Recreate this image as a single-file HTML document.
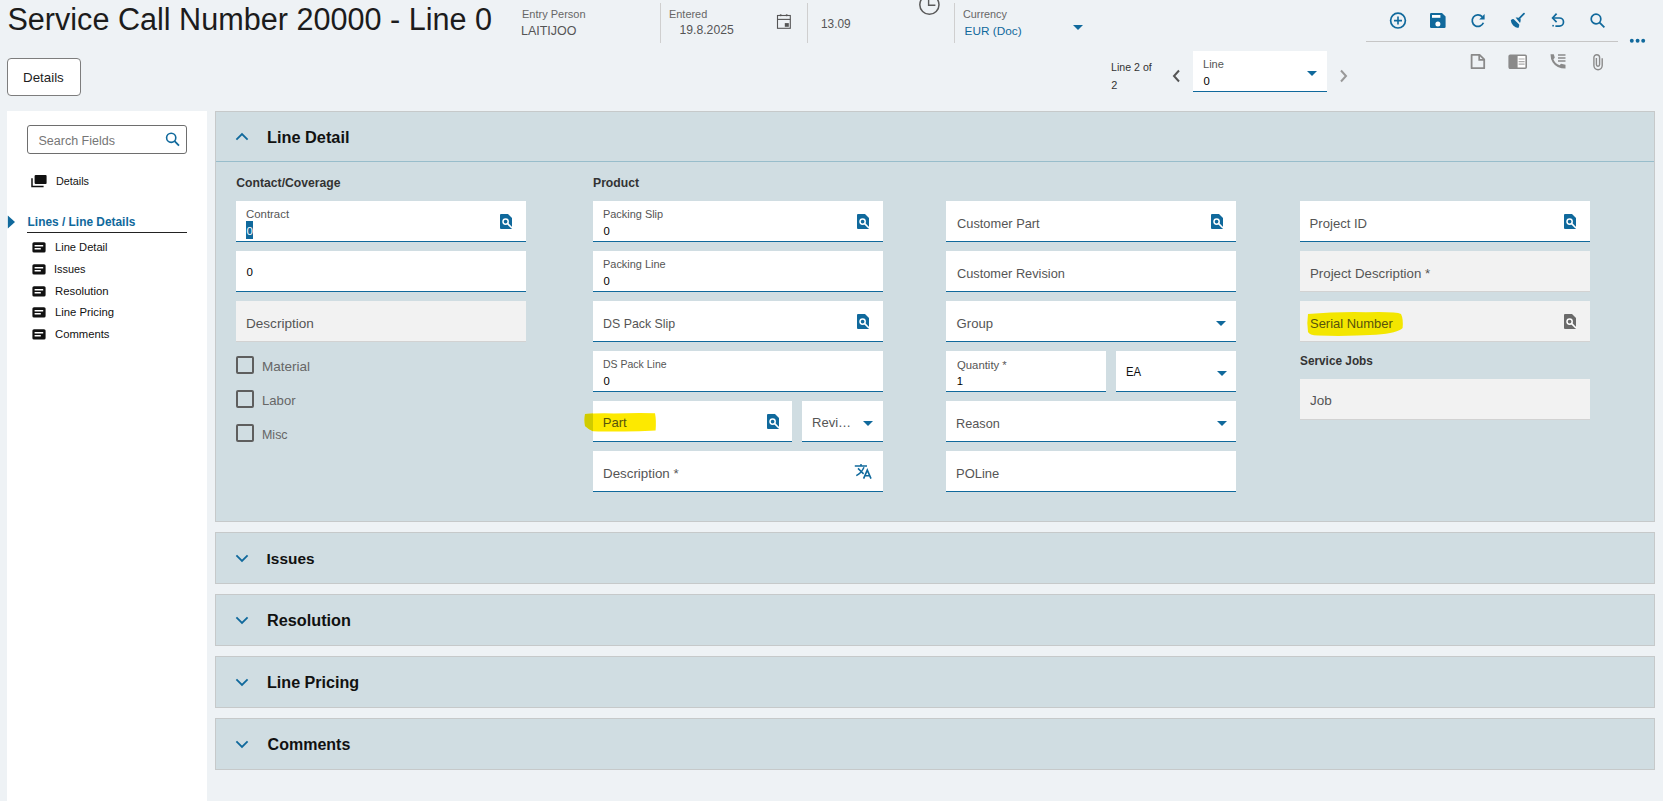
<!DOCTYPE html>
<html><head><meta charset="utf-8"><title>Service Call</title>
<style>
html,body{margin:0;padding:0}
body{width:1663px;height:801px;overflow:hidden;position:relative;background:#eef2f5;font-family:"Liberation Sans",sans-serif}
.t{position:absolute;white-space:nowrap;line-height:30px;height:30px}
svg{overflow:visible}
</style></head><body>
<div class="t" style="left:7.40px;top:4.40px;font-size:30.6px;color:#1c1c1c;font-weight:400;">Service Call Number 20000 - Line 0</div>
<div style="position:absolute;left:7px;top:58px;width:72px;height:36px;background:#fff;border:1px solid #7d7d7d;border-radius:4px"></div>
<div class="t" style="left:23.46px;top:62.53px;font-size:12.9px;color:#1e1e1e;font-weight:400;transform:scaleX(1.0354);transform-origin:0 0;">Details</div>
<div class="t" style="left:522.00px;top:-0.81px;font-size:11px;color:#666;font-weight:400;">Entry Person</div>
<div class="t" style="left:520.98px;top:15.77px;font-size:12.2px;color:#555;font-weight:400;transform:scaleX(1.0247);transform-origin:0 0;">LAITIJOO</div>
<div style="position:absolute;left:660px;top:3px;width:1px;height:40px;background:#cfcfcf"></div>
<div class="t" style="left:669.40px;top:-0.81px;font-size:11px;color:#666;font-weight:400;transform:scaleX(0.9920);transform-origin:0 0;">Entered</div>
<div class="t" style="left:679.50px;top:14.77px;font-size:12.2px;color:#555;font-weight:400;">19.8.2025</div>
<svg style="position:absolute;left:770px;top:8px" width="30" height="26" viewBox="0 0 30 26"><rect x="7.5" y="7.5" width="12.8" height="12.8" fill="none" stroke="#555" stroke-width="1.1"/><path d="M7.5 11.4H20.3" stroke="#555" stroke-width="1.1"/><circle cx="10.7" cy="7.3" r="1.05" fill="#555"/><circle cx="16.7" cy="7.3" r="1.05" fill="#555"/><rect x="14.8" y="15.1" width="4" height="3.7" fill="#555"/></svg>
<div style="position:absolute;left:807px;top:3px;width:1px;height:40px;background:#cfcfcf"></div>
<div class="t" style="left:821.00px;top:8.84px;font-size:12px;color:#555;font-weight:400;transform:scaleX(0.9883);transform-origin:0 0;">13.09</div>
<svg style="position:absolute;left:917px;top:0px" width="25" height="16" viewBox="0 0 25 16"><circle cx="12.4" cy="4.7" r="9.6" fill="none" stroke="#5a5a5a" stroke-width="1.5"/><path d="M11.6 -2V5.3H18.4" fill="none" stroke="#5a5a5a" stroke-width="1.4"/></svg>
<div style="position:absolute;left:954px;top:3px;width:1px;height:40px;background:#cfcfcf"></div>
<div class="t" style="left:963.00px;top:-0.81px;font-size:11px;color:#666;font-weight:400;transform:scaleX(0.9840);transform-origin:0 0;">Currency</div>
<div class="t" style="left:964.60px;top:15.91px;font-size:11.8px;color:#10699c;font-weight:400;">EUR (Doc)</div>
<svg style="position:absolute;left:1073px;top:25px" width="10" height="5" viewBox="0 0 10 5"><path d="M0 0H10L5.0 5Z" fill="#10699c"/></svg>
<svg style="position:absolute;left:1389px;top:12px" width="18" height="18" viewBox="0 0 18 18"><circle cx="9" cy="8.6" r="7.4" fill="none" stroke="#10699c" stroke-width="1.7"/><path d="M9 4.6V12.6M5 8.6H13" stroke="#10699c" stroke-width="1.6"/></svg>
<svg style="position:absolute;left:1430px;top:13px" width="16" height="15" viewBox="0 0 16 15"><path d="M1.2 0H12L15.6 3.6V13.8Q15.6 15 14.4 15H1.2Q0 15 0 13.8V1.2Q0 0 1.2 0Z" fill="#10699c"/><rect x="2" y="2" width="8.4" height="2.8" fill="#fff"/><circle cx="7.9" cy="11" r="2.5" fill="#fff"/></svg>
<svg style="position:absolute;left:1470px;top:13px" width="16" height="15" viewBox="0 0 16 15"><path d="M13.4 9.8A5.8 5.8 0 1 1 12.2 3.6" fill="none" stroke="#10699c" stroke-width="1.7"/><path d="M14.6 1V6.4H9.2Z" fill="#10699c"/></svg>
<svg style="position:absolute;left:1509px;top:12px" width="17" height="17" viewBox="0 0 17 17"><path d="M15 1.6L10.8 5.8" stroke="#10699c" stroke-width="1.8" stroke-linecap="round"/><path d="M6.6 5.6Q9.4 5.2 11.6 6.8Q12 9 11 11Z" fill="#10699c"/><path d="M1.8 8.2Q3.5 6.6 4.8 7.2L10.2 12.6Q10.6 14 9.4 16Q6.4 15.6 4.2 13.4Q2 11.2 1.8 8.2Z" fill="#10699c"/></svg>
<svg style="position:absolute;left:1551px;top:12px" width="15" height="15" viewBox="0 0 15 15"><path d="M2 6H8.4A4.1 4.1 0 0 1 8.4 14.2H4.4" fill="none" stroke="#10699c" stroke-width="1.7"/><path d="M5.6 1.6L1.6 6L5.6 10.2" fill="none" stroke="#10699c" stroke-width="1.7"/><rect x="1.3" y="12.9" width="1.6" height="1.6" fill="#10699c"/></svg>
<svg style="position:absolute;left:1589px;top:12px" width="17" height="17" viewBox="0 0 17 17"><circle cx="7" cy="7" r="4.8" fill="none" stroke="#10699c" stroke-width="1.7"/><path d="M10.6 10.6L15.4 15.4" stroke="#10699c" stroke-width="1.8"/></svg>
<div style="position:absolute;left:1366px;top:41px;width:252px;height:1px;background:#c6c6c6"></div>
<svg style="position:absolute;left:1630px;top:38px" width="16" height="6" viewBox="0 0 16 6"><circle cx="1.8" cy="2.8" r="1.95" fill="#10699c"/><circle cx="7.6" cy="2.8" r="1.95" fill="#10699c"/><circle cx="13.2" cy="2.8" r="1.95" fill="#10699c"/></svg>
<svg style="position:absolute;left:1470px;top:53px" width="16" height="17" viewBox="0 0 16 17"><path d="M1.6 1.8H9.6L14.2 6.4V15.2H1.6Z" fill="none" stroke="#8a8a8a" stroke-width="1.8" stroke-linejoin="round"/><path d="M9.2 1.8V6.8H14.2" fill="none" stroke="#8a8a8a" stroke-width="1.7"/></svg>
<svg style="position:absolute;left:1508px;top:54px" width="20" height="16" viewBox="0 0 20 16"><rect x="1.2" y="1.2" width="17" height="13" rx="1" fill="#fff" stroke="#8a8a8a" stroke-width="1.6"/><rect x="1" y="1" width="8.6" height="13.6" fill="#8a8a8a"/><path d="M10.6 5H16.6M10.6 7.6H16.6M10.6 10.2H16.6" stroke="#aaa" stroke-width="1.2"/></svg>
<svg style="position:absolute;left:1550px;top:53px" width="17" height="17" viewBox="0 0 17 17"><path d="M0.5 1.2H3.8L4.8 4.8L3.4 6.2Q5 10.6 9.6 12.2L11 10.8L15.5 11.8V15.6Q6.6 15.6 2.6 9.2Q0.5 5.8 0.5 1.2Z" fill="#8a8a8a"/><path d="M8 2H15.5M8 5H15.5M8 8H15.5" stroke="#8a8a8a" stroke-width="1.5"/></svg>
<svg style="position:absolute;left:1585px;top:48px" width="25" height="27" viewBox="0 0 25 27"><path d="M11.4 10V16.6A1.6 1.6 0 0 0 14.6 16.6V9.6A2.85 2.85 0 0 0 8.9 9.6V17.6A4.15 4.15 0 0 0 17.2 17.6V10.2" fill="none" stroke="#8a8a8a" stroke-width="1.4"/></svg>
<div class="t" style="left:1111.30px;top:52.22px;font-size:10.9px;color:#333;font-weight:400;transform:scaleX(0.9753);transform-origin:0 0;">Line 2 of</div>
<div class="t" style="left:1111.30px;top:70.22px;font-size:10.9px;color:#333;font-weight:400;">2</div>
<svg style="position:absolute;left:1171px;top:69px" width="10" height="14" viewBox="0 0 10 14"><path d="M8 1.5L3 7L8 12.5" fill="none" stroke="#555" stroke-width="2"/></svg>
<div style="position:absolute;left:1193px;top:51px;width:134px;height:40px;background:#fff;border-bottom:1px solid #10699c"></div>
<div class="t" style="left:1203.40px;top:49.19px;font-size:11px;color:#555;font-weight:400;transform:scaleX(1.0058);transform-origin:0 0;">Line</div>
<div class="t" style="left:1203.40px;top:66.08px;font-size:11.3px;color:#000;font-weight:400;">0</div>
<svg style="position:absolute;left:1307px;top:71px" width="10" height="5" viewBox="0 0 10 5"><path d="M0 0H10L5.0 5Z" fill="#10699c"/></svg>
<svg style="position:absolute;left:1339px;top:69px" width="10" height="14" viewBox="0 0 10 14"><path d="M2 1.5L7 7L2 12.5" fill="none" stroke="#999" stroke-width="2"/></svg>
<div style="position:absolute;left:7px;top:111px;width:200px;height:690px;background:#fff"></div>
<div style="position:absolute;left:27px;top:125px;width:158px;height:27px;background:#fff;border:1px solid #6e6e6e;border-radius:3px"></div>
<div class="t" style="left:38.50px;top:125.67px;font-size:12.5px;color:#767676;font-weight:400;">Search Fields</div>
<svg style="position:absolute;left:165px;top:132px" width="16" height="15" viewBox="0 0 16 15"><circle cx="6.2" cy="5.8" r="4.6" fill="none" stroke="#10699c" stroke-width="1.6"/><path d="M9.6 9.2L14 13.6" stroke="#10699c" stroke-width="1.8"/></svg>
<svg style="position:absolute;left:31px;top:175px" width="16" height="13" viewBox="0 0 16 13"><rect x="3.6" y="0" width="12" height="9" rx="1" fill="#111"/><path d="M1 3.2V11.6H12.6" fill="none" stroke="#111" stroke-width="1.5"/></svg>
<div class="t" style="left:55.50px;top:166.19px;font-size:11px;color:#111;font-weight:400;transform:scaleX(0.9817);transform-origin:0 0;">Details</div>
<svg style="position:absolute;left:7px;top:215px" width="9" height="14" viewBox="0 0 9 14"><path d="M0.8 0.5L8 7L0.8 13.5Z" fill="#10699c"/></svg>
<div class="t" style="left:27.60px;top:206.88px;font-size:11.9px;color:#10699c;font-weight:700;">Lines / Line Details</div>
<div style="position:absolute;left:27px;top:232px;width:160px;height:1px;background:#222"></div>
<svg style="position:absolute;left:32px;top:242px" width="14" height="11" viewBox="0 0 14 11"><rect x="0.4" y="0.2" width="13.2" height="10.4" rx="1.6" fill="#111"/><path d="M2.6 3.7H11.2M2.6 6.7H8.8" stroke="#fff" stroke-width="1.4"/></svg>
<div class="t" style="left:55.40px;top:232.19px;font-size:11px;color:#111;font-weight:400;transform:scaleX(1.0110);transform-origin:0 0;">Line Detail</div>
<svg style="position:absolute;left:32px;top:264px" width="14" height="11" viewBox="0 0 14 11"><rect x="0.4" y="0.2" width="13.2" height="10.4" rx="1.6" fill="#111"/><path d="M2.6 3.7H11.2M2.6 6.7H8.8" stroke="#fff" stroke-width="1.4"/></svg>
<div class="t" style="left:54.41px;top:254.19px;font-size:11px;color:#111;font-weight:400;transform:scaleX(0.9907);transform-origin:0 0;">Issues</div>
<svg style="position:absolute;left:32px;top:286px" width="14" height="11" viewBox="0 0 14 11"><rect x="0.4" y="0.2" width="13.2" height="10.4" rx="1.6" fill="#111"/><path d="M2.6 3.7H11.2M2.6 6.7H8.8" stroke="#fff" stroke-width="1.4"/></svg>
<div class="t" style="left:55.40px;top:276.19px;font-size:11px;color:#111;font-weight:400;transform:scaleX(1.0317);transform-origin:0 0;">Resolution</div>
<svg style="position:absolute;left:32px;top:307px" width="14" height="11" viewBox="0 0 14 11"><rect x="0.4" y="0.2" width="13.2" height="10.4" rx="1.6" fill="#111"/><path d="M2.6 3.7H11.2M2.6 6.7H8.8" stroke="#fff" stroke-width="1.4"/></svg>
<div class="t" style="left:55.40px;top:297.19px;font-size:11px;color:#111;font-weight:400;transform:scaleX(1.0286);transform-origin:0 0;">Line Pricing</div>
<svg style="position:absolute;left:32px;top:329px" width="14" height="11" viewBox="0 0 14 11"><rect x="0.4" y="0.2" width="13.2" height="10.4" rx="1.6" fill="#111"/><path d="M2.6 3.7H11.2M2.6 6.7H8.8" stroke="#fff" stroke-width="1.4"/></svg>
<div class="t" style="left:55.40px;top:319.19px;font-size:11px;color:#111;font-weight:400;transform:scaleX(1.0246);transform-origin:0 0;">Comments</div>
<div style="position:absolute;left:215px;top:111px;width:1438px;height:409px;background:#d0dde2;border:1px solid #c6c9ca"></div>
<svg style="position:absolute;left:235px;top:132px" width="14" height="9" viewBox="0 0 14 9"><path d="M1.4 7.6L7 2L12.6 7.6" fill="none" stroke="#10699c" stroke-width="1.8"/></svg>
<div class="t" style="left:266.78px;top:123.46px;font-size:16px;color:#111;font-weight:700;transform:scaleX(1.0194);transform-origin:0 0;">Line Detail</div>
<div style="position:absolute;left:216px;top:161px;width:1438px;height:1px;background:#98bdcb"></div>
<div class="t" style="left:236.30px;top:167.77px;font-size:12.2px;color:#333;font-weight:700;">Contact/Coverage</div>
<div class="t" style="left:593.00px;top:167.77px;font-size:12.2px;color:#333;font-weight:700;">Product</div>
<div style="position:absolute;left:236px;top:201px;width:290px;height:40px;background:#fff;border-bottom:1px solid #10699c"></div>
<div class="t" style="left:246.40px;top:198.89px;font-size:11px;color:#555;font-weight:400;transform:scaleX(1.0357);transform-origin:0 0;">Contract</div>
<div style="position:absolute;left:246px;top:221px;width:7px;height:18px;background:#10699c"></div>
<div class="t" style="left:246.60px;top:216.02px;font-size:11.5px;color:#fff;font-weight:400;">0</div>
<svg style="position:absolute;left:500px;top:214px" width="12" height="15" viewBox="0 0 12 15"><path d="M1 0H8L12 4V14Q12 15 11 15H1Q0 15 0 14V1Q0 0 1 0Z" fill="#10699c"/><circle cx="5.6" cy="7.6" r="2.6" fill="none" stroke="#fff" stroke-width="1.5"/><path d="M7.4 9.4L12 14" stroke="#fff" stroke-width="1.6"/></svg>
<div style="position:absolute;left:236px;top:251px;width:290px;height:40px;background:#fff;border-bottom:1px solid #10699c"></div>
<div class="t" style="left:246.40px;top:257.02px;font-size:11.5px;color:#000;font-weight:400;">0</div>
<div style="position:absolute;left:236px;top:301px;width:290px;height:40px;background:#f2f2f2;border-bottom:1px solid #d2d2d2"></div>
<div class="t" style="left:245.56px;top:308.96px;font-size:13.1px;color:#555;font-weight:400;transform:scaleX(1.0356);transform-origin:0 0;">Description</div>
<div style="position:absolute;left:236px;top:356px;width:14px;height:14px;border:2px solid #5e5e5e;border-radius:2px"></div>
<div class="t" style="left:262.24px;top:351.56px;font-size:12.8px;color:#666;font-weight:400;transform:scaleX(1.0556);transform-origin:0 0;">Material</div>
<div style="position:absolute;left:236px;top:390px;width:14px;height:14px;border:2px solid #5e5e5e;border-radius:2px"></div>
<div class="t" style="left:262.27px;top:385.56px;font-size:12.8px;color:#666;font-weight:400;transform:scaleX(1.0256);transform-origin:0 0;">Labor</div>
<div style="position:absolute;left:236px;top:424px;width:14px;height:14px;border:2px solid #5e5e5e;border-radius:2px"></div>
<div class="t" style="left:262.33px;top:419.56px;font-size:12.8px;color:#666;font-weight:400;transform:scaleX(0.9729);transform-origin:0 0;">Misc</div>
<div style="position:absolute;left:593px;top:201px;width:290px;height:40px;background:#fff;border-bottom:1px solid #10699c"></div>
<div class="t" style="left:603.40px;top:198.89px;font-size:11px;color:#555;font-weight:400;transform:scaleX(0.9931);transform-origin:0 0;">Packing Slip</div>
<div class="t" style="left:603.40px;top:216.08px;font-size:11.3px;color:#000;font-weight:400;">0</div>
<svg style="position:absolute;left:857px;top:214px" width="12" height="15" viewBox="0 0 12 15"><path d="M1 0H8L12 4V14Q12 15 11 15H1Q0 15 0 14V1Q0 0 1 0Z" fill="#10699c"/><circle cx="5.6" cy="7.6" r="2.6" fill="none" stroke="#fff" stroke-width="1.5"/><path d="M7.4 9.4L12 14" stroke="#fff" stroke-width="1.6"/></svg>
<div style="position:absolute;left:593px;top:251px;width:290px;height:40px;background:#fff;border-bottom:1px solid #10699c"></div>
<div class="t" style="left:603.40px;top:248.89px;font-size:11px;color:#555;font-weight:400;transform:scaleX(0.9941);transform-origin:0 0;">Packing Line</div>
<div class="t" style="left:603.40px;top:266.08px;font-size:11.3px;color:#000;font-weight:400;">0</div>
<div style="position:absolute;left:593px;top:301px;width:290px;height:40px;background:#fff;border-bottom:1px solid #10699c"></div>
<div class="t" style="left:602.65px;top:308.96px;font-size:13.1px;color:#555;font-weight:400;transform:scaleX(0.9451);transform-origin:0 0;">DS Pack Slip</div>
<svg style="position:absolute;left:857px;top:314px" width="12" height="15" viewBox="0 0 12 15"><path d="M1 0H8L12 4V14Q12 15 11 15H1Q0 15 0 14V1Q0 0 1 0Z" fill="#10699c"/><circle cx="5.6" cy="7.6" r="2.6" fill="none" stroke="#fff" stroke-width="1.5"/><path d="M7.4 9.4L12 14" stroke="#fff" stroke-width="1.6"/></svg>
<div style="position:absolute;left:593px;top:351px;width:290px;height:40px;background:#fff;border-bottom:1px solid #10699c"></div>
<div class="t" style="left:603.40px;top:348.89px;font-size:11px;color:#555;font-weight:400;transform:scaleX(0.9545);transform-origin:0 0;">DS Pack Line</div>
<div class="t" style="left:603.40px;top:366.08px;font-size:11.3px;color:#000;font-weight:400;">0</div>
<div style="position:absolute;left:593px;top:401px;width:199px;height:40px;background:#fff;border-bottom:1px solid #10699c"></div>
<svg style="position:absolute;left:584px;top:412px" width="73" height="21" viewBox="0 0 73 21"><defs><clipPath id="cpl"><rect x="0" y="0" width="9" height="21"/></clipPath></defs><path id="hp" d="M1 2Q12 1 30 1.4Q52 0.8 71 1.2Q72.4 8 71.6 18.6Q50 19.8 30 19.4Q16 19.6 9 19.2Q4 17 1 14Q0 8 1 2Z" fill="#fde900"/><path d="M1 2Q12 1 30 1.4Q52 0.8 71 1.2Q72.4 8 71.6 18.6Q50 19.8 30 19.4Q16 19.6 9 19.2Q4 17 1 14Q0 8 1 2Z" fill="#d0cb00" clip-path="url(#cpl)"/></svg>
<div class="t" style="left:602.70px;top:408.46px;font-size:13.1px;color:#57530c;font-weight:400;">Part</div>
<svg style="position:absolute;left:767px;top:414px" width="12" height="15" viewBox="0 0 12 15"><path d="M1 0H8L12 4V14Q12 15 11 15H1Q0 15 0 14V1Q0 0 1 0Z" fill="#10699c"/><circle cx="5.6" cy="7.6" r="2.6" fill="none" stroke="#fff" stroke-width="1.5"/><path d="M7.4 9.4L12 14" stroke="#fff" stroke-width="1.6"/></svg>
<div style="position:absolute;left:802px;top:401px;width:81px;height:40px;background:#fff;border-bottom:1px solid #10699c"></div>
<div class="t" style="left:812.01px;top:408.46px;font-size:13.1px;color:#555;font-weight:400;transform:scaleX(0.9948);transform-origin:0 0;">Revi…</div>
<svg style="position:absolute;left:863px;top:421px" width="10" height="5" viewBox="0 0 10 5"><path d="M0 0H10L5.0 5Z" fill="#10699c"/></svg>
<div style="position:absolute;left:593px;top:451px;width:290px;height:40px;background:#fff;border-bottom:1px solid #10699c"></div>
<div class="t" style="left:602.58px;top:458.96px;font-size:13.1px;color:#555;font-weight:400;transform:scaleX(1.0187);transform-origin:0 0;">Description *</div>
<svg style="position:absolute;left:848px;top:458px" width="30" height="26" viewBox="0 0 30 26"><path d="M6.8 8H19M13 6V8M16 9.2Q13.4 15 8.3 17.6M10 10.4L15.6 15.9" fill="none" stroke="#10699c" stroke-width="1.5"/><path d="M15.6 20.6L19.3 12.1L23 20.6M16.8 17.7H21.8" fill="none" stroke="#10699c" stroke-width="1.6"/></svg>
<div style="position:absolute;left:946px;top:201px;width:290px;height:40px;background:#fff;border-bottom:1px solid #10699c"></div>
<div class="t" style="left:956.60px;top:208.96px;font-size:13.1px;color:#555;font-weight:400;transform:scaleX(0.9791);transform-origin:0 0;">Customer Part</div>
<svg style="position:absolute;left:1211px;top:214px" width="12" height="15" viewBox="0 0 12 15"><path d="M1 0H8L12 4V14Q12 15 11 15H1Q0 15 0 14V1Q0 0 1 0Z" fill="#10699c"/><circle cx="5.6" cy="7.6" r="2.6" fill="none" stroke="#fff" stroke-width="1.5"/><path d="M7.4 9.4L12 14" stroke="#fff" stroke-width="1.6"/></svg>
<div style="position:absolute;left:946px;top:251px;width:290px;height:40px;background:#fff;border-bottom:1px solid #10699c"></div>
<div class="t" style="left:956.60px;top:258.96px;font-size:13.1px;color:#555;font-weight:400;transform:scaleX(0.9753);transform-origin:0 0;">Customer Revision</div>
<div style="position:absolute;left:946px;top:301px;width:290px;height:40px;background:#fff;border-bottom:1px solid #10699c"></div>
<div class="t" style="left:956.60px;top:308.96px;font-size:13.1px;color:#555;font-weight:400;">Group</div>
<svg style="position:absolute;left:1216px;top:321px" width="10" height="5" viewBox="0 0 10 5"><path d="M0 0H10L5.0 5Z" fill="#10699c"/></svg>
<div style="position:absolute;left:946px;top:351px;width:160px;height:40px;background:#fff;border-bottom:1px solid #10699c"></div>
<div class="t" style="left:956.80px;top:349.69px;font-size:11px;color:#555;font-weight:400;transform:scaleX(1.0302);transform-origin:0 0;">Quantity *</div>
<div class="t" style="left:956.80px;top:366.08px;font-size:11.3px;color:#000;font-weight:400;">1</div>
<div style="position:absolute;left:1116px;top:351px;width:120px;height:40px;background:#fff;border-bottom:1px solid #10699c"></div>
<div class="t" style="left:1125.77px;top:356.77px;font-size:12.2px;color:#111;font-weight:400;transform:scaleX(0.9300);transform-origin:0 0;">EA</div>
<svg style="position:absolute;left:1217px;top:371px" width="10" height="5" viewBox="0 0 10 5"><path d="M0 0H10L5.0 5Z" fill="#10699c"/></svg>
<div style="position:absolute;left:946px;top:401px;width:290px;height:40px;background:#fff;border-bottom:1px solid #10699c"></div>
<div class="t" style="left:955.63px;top:408.96px;font-size:13.1px;color:#555;font-weight:400;transform:scaleX(0.9692);transform-origin:0 0;">Reason</div>
<svg style="position:absolute;left:1217px;top:421px" width="10" height="5" viewBox="0 0 10 5"><path d="M0 0H10L5.0 5Z" fill="#10699c"/></svg>
<div style="position:absolute;left:946px;top:451px;width:290px;height:40px;background:#fff;border-bottom:1px solid #10699c"></div>
<div class="t" style="left:955.61px;top:458.96px;font-size:13.1px;color:#555;font-weight:400;transform:scaleX(0.9908);transform-origin:0 0;">POLine</div>
<div style="position:absolute;left:1300px;top:201px;width:290px;height:40px;background:#fff;border-bottom:1px solid #10699c"></div>
<div class="t" style="left:1309.60px;top:208.96px;font-size:13.1px;color:#555;font-weight:400;">Project ID</div>
<svg style="position:absolute;left:1564px;top:214px" width="12" height="15" viewBox="0 0 12 15"><path d="M1 0H8L12 4V14Q12 15 11 15H1Q0 15 0 14V1Q0 0 1 0Z" fill="#10699c"/><circle cx="5.6" cy="7.6" r="2.6" fill="none" stroke="#fff" stroke-width="1.5"/><path d="M7.4 9.4L12 14" stroke="#fff" stroke-width="1.6"/></svg>
<div style="position:absolute;left:1300px;top:251px;width:290px;height:40px;background:#f2f2f2;border-bottom:1px solid #d2d2d2"></div>
<div class="t" style="left:1309.59px;top:258.96px;font-size:13.1px;color:#555;font-weight:400;transform:scaleX(1.0126);transform-origin:0 0;">Project Description *</div>
<div style="position:absolute;left:1300px;top:301px;width:290px;height:40px;background:#f2f2f2;border-bottom:1px solid #d2d2d2"></div>
<svg style="position:absolute;left:1306px;top:311px" width="98" height="26" viewBox="0 0 98 26"><path d="M2 3Q30 0.6 60 1.2Q90 0.4 95 3Q97.5 8 96.6 17Q92 22 70 23.8Q40 25.6 12 24.6Q3 24 2 21Q0.6 12 2 3Z" fill="#f3e600"/></svg>
<div class="t" style="left:1310.00px;top:308.66px;font-size:13.1px;color:#57530c;font-weight:400;transform:scaleX(0.9891);transform-origin:0 0;">Serial Number</div>
<svg style="position:absolute;left:1564px;top:314px" width="12" height="15" viewBox="0 0 12 15"><path d="M1 0H8L12 4V14Q12 15 11 15H1Q0 15 0 14V1Q0 0 1 0Z" fill="#6a6a6a"/><circle cx="5.6" cy="7.6" r="2.6" fill="none" stroke="#fff" stroke-width="1.5"/><path d="M7.4 9.4L12 14" stroke="#fff" stroke-width="1.6"/></svg>
<div class="t" style="left:1299.90px;top:346.07px;font-size:12.2px;color:#333;font-weight:700;transform:scaleX(0.9692);transform-origin:0 0;">Service Jobs</div>
<div style="position:absolute;left:1300px;top:379px;width:290px;height:40px;background:#f2f2f2;border-bottom:1px solid #d2d2d2"></div>
<div class="t" style="left:1310.00px;top:386.46px;font-size:13.1px;color:#555;font-weight:400;transform:scaleX(1.0322);transform-origin:0 0;">Job</div>
<div style="position:absolute;left:215px;top:532px;width:1438px;height:50px;background:#d0dde2;border:1px solid #c6c9ca"></div>
<svg style="position:absolute;left:235px;top:554px" width="14" height="9" viewBox="0 0 14 9"><path d="M1.4 1.4L7 7L12.6 1.4" fill="none" stroke="#10699c" stroke-width="1.8"/></svg>
<div class="t" style="left:266.60px;top:544.06px;font-size:15.4px;color:#111;font-weight:700;">Issues</div>
<div style="position:absolute;left:215px;top:594px;width:1438px;height:50px;background:#d0dde2;border:1px solid #c6c9ca"></div>
<svg style="position:absolute;left:235px;top:616px" width="14" height="9" viewBox="0 0 14 9"><path d="M1.4 1.4L7 7L12.6 1.4" fill="none" stroke="#10699c" stroke-width="1.8"/></svg>
<div class="t" style="left:266.59px;top:606.46px;font-size:16px;color:#111;font-weight:700;transform:scaleX(1.0150);transform-origin:0 0;">Resolution</div>
<div style="position:absolute;left:215px;top:656px;width:1438px;height:50px;background:#d0dde2;border:1px solid #c6c9ca"></div>
<svg style="position:absolute;left:235px;top:678px" width="14" height="9" viewBox="0 0 14 9"><path d="M1.4 1.4L7 7L12.6 1.4" fill="none" stroke="#10699c" stroke-width="1.8"/></svg>
<div class="t" style="left:266.59px;top:668.46px;font-size:16px;color:#111;font-weight:700;transform:scaleX(1.0067);transform-origin:0 0;">Line Pricing</div>
<div style="position:absolute;left:215px;top:718px;width:1438px;height:50px;background:#d0dde2;border:1px solid #c6c9ca"></div>
<svg style="position:absolute;left:235px;top:740px" width="14" height="9" viewBox="0 0 14 9"><path d="M1.4 1.4L7 7L12.6 1.4" fill="none" stroke="#10699c" stroke-width="1.8"/></svg>
<div class="t" style="left:267.60px;top:730.46px;font-size:16px;color:#111;font-weight:700;">Comments</div>
</body></html>
